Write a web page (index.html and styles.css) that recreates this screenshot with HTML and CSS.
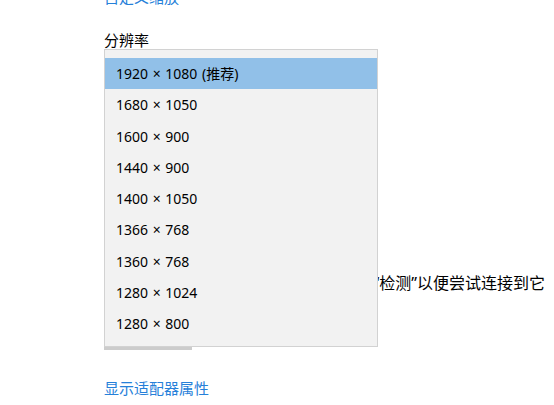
FILE: index.html
```html
<!DOCTYPE html>
<html lang="zh-CN">
<head>
<meta charset="utf-8">
<link rel="stylesheet" href="styles.css">
</head>
<body>
<div class="page">
  <a class="link link-top">自定义缩放</a>
  <div class="label">分辨率</div>
  <div class="spacer"></div>
  <div class="para"><span class="para-line">较旧的显示器不一定能自动连接，请选择“检测”以便尝试连接到它</span></div>
  <div class="btn">检测</div>
  <a class="link link-bottom">显示适配器属性</a>

  <ul class="popup">
    <li class="opt selected">1920 × 1080 (推荐)</li>
    <li class="opt">1680 × 1050</li>
    <li class="opt">1600 × 900</li>
    <li class="opt">1440 × 900</li>
    <li class="opt">1400 × 1050</li>
    <li class="opt">1366 × 768</li>
    <li class="opt">1360 × 768</li>
    <li class="opt">1280 × 1024</li>
    <li class="opt">1280 × 800</li>
  </ul>
</div>
</body>
</html>
```

FILE: styles.css
```css
html, body {
  margin: 0;
  padding: 0;
  background: #ffffff;
  width: 554px;
  height: 405px;
  overflow: hidden;
}

.page {
  position: relative;
  display: flow-root;
  padding-left: 104px;
  font-family: "Noto Sans", "Noto Sans CJK SC", sans-serif;
  color: #000000;
  height: 405px;
  box-sizing: border-box;
}

.link {
  display: block;
  color: #2680d9;
  font-family: "Noto Sans CJK SC", sans-serif;
  font-size: 15px;
  line-height: 20px;
  text-decoration: none;
}

.link-top {
  margin-top: -13px;
}

.label {
  margin-top: 23px;
  font-family: "Noto Sans CJK SC", sans-serif;
  font-size: 15px;
  line-height: 20px;
}

.spacer {
  height: 222px;
}

.para {
  width: 441px;
  display: flex;
  justify-content: flex-end;
  overflow: hidden;
  font-family: "Noto Sans", "Noto Sans CJK SC", sans-serif;
  font-size: 16px;
  line-height: 22px;
  white-space: nowrap;
}

.para-line {
  flex: none;
}

.btn {
  margin-top: 25px;
  width: 88px;
  height: 31px;
  background: #cccccc;
  font-family: "Noto Sans CJK SC", sans-serif;
  font-size: 15px;
  line-height: 31px;
  text-align: center;
}

.link-bottom {
  margin-top: 28px;
}

.popup {
  position: absolute;
  left: 104px;
  top: 49px;
  width: 274px;
  height: 298px;
  box-sizing: border-box;
  margin: 0;
  padding: 8px 0 0 0;
  list-style: none;
  background: #f2f2f2;
  border: 1px solid #d2d2d2;
}

.opt {
  height: 31.25px;
  line-height: 31px;
  padding-left: 11px;
  font-size: 14px;
  font-family: "Noto Sans", "Noto Sans CJK SC", sans-serif;
  color: #000000;
  word-spacing: 1px;
}

.opt.selected {
  background: #91c0e8;
}
```
